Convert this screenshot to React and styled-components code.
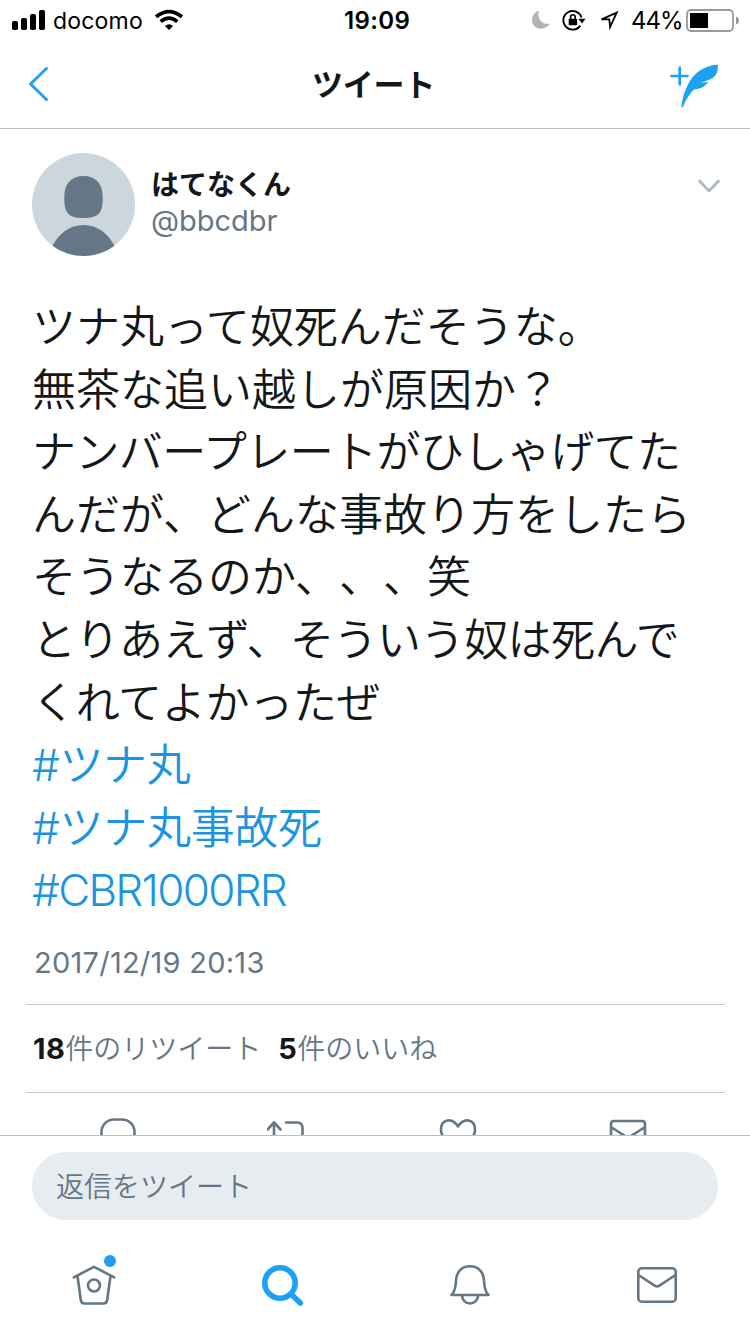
import React from "react";
import styled, { createGlobalStyle } from "styled-components";

const blue = "#1da1f2";
const slate = "#657786";
const ink = "#14171a";
const line = "#c3cdd4";

const GlobalStyle = createGlobalStyle`
  * {
    box-sizing: border-box;
  }
  body {
    margin: 0;
    background: white;
    color: ${ink};
    font-family: Inter, "Noto Sans CJK JP", sans-serif;
    text-spacing-trim: space-all;
  }
  svg {
    display: block;
    flex: none;
  }
`;

const Screen = styled.div`
  width: 750px;
  height: 1334px;
  display: flex;
  flex-direction: column;
  overflow: hidden;
  background: white;
`;

const StatusBar = styled.div`
  height: 40px;
  flex: none;
  display: grid;
  grid-template-columns: 344px 1fr 219px;
  color: black;
  font-size: 24px;
  line-height: 42px;
  white-space: nowrap;
`;

const StatusGroup = styled.div`
  display: flex;
`;

const StatusText = styled.span`
  width: ${props => props.width}px;
  font-size: ${props => props.size || 24}px;
  letter-spacing: ${props => props.spacing || 0}px;
`;

const Clock = styled.span`
  font-weight: 600;
  font-size: 24px;
  letter-spacing: 0.4px;
`;

const NavBar = styled.header`
  height: 89px;
  flex: none;
  display: flex;
  align-items: center;
  justify-content: space-between;
  padding-top: 2px;
  border-bottom: 1px solid #bcc0c4;
`;

const Title = styled.h1`
  margin: 0;
  font-size: 31px;
  font-weight: 700;
  line-height: 40px;
  letter-spacing: -0.2px;
`;

const Content = styled.main`
  flex: 1;
  min-height: 0;
  overflow: hidden;
  padding: 24px 25px 0 26px;
`;

const Author = styled.div`
  display: flex;
  padding-left: 6px;
  height: 104px;
`;

const Names = styled.div`
  flex: 1;
  padding: 14px 0 0 16px;
`;

const Name = styled.div`
  font-size: 28px;
  font-weight: 700;
  line-height: 36px;
`;

const Handle = styled.div`
  font-size: 29px;
  line-height: 36px;
  color: ${slate};
`;

const TweetText = styled.div`
  padding: 39px 0 0 6px;
`;

const TweetLine = styled.div`
  height: 62.6px;
  line-height: 62.6px;
  font-size: 44px;
  font-weight: ${props => (props.latin ? 300 : 350)};
  white-space: nowrap;
  letter-spacing: ${props => props.spacing || 0}px;
  color: ${props => (props.tag ? "#1b95e0" : ink)};
`;

const Timestamp = styled.div`
  height: 83px;
  padding: 21px 0 0 8px;
  font-size: 29px;
  line-height: 40px;
  letter-spacing: 0.25px;
  color: ${slate};
  border-bottom: 1px solid ${line};
`;

const Stats = styled.div`
  display: flex;
  gap: 17px;
  height: 88px;
  padding: 24px 0 0 7px;
  font-size: 28px;
  font-weight: 350;
  line-height: 40px;
  color: ${slate};
  border-bottom: 1px solid ${line};
`;

const Count = styled.b`
  font-size: 29px;
  font-weight: 700;
  letter-spacing: 0.4px;
  color: ${ink};
`;

const Actions = styled.div`
  display: grid;
  grid-template-columns: repeat(4, 170px);
  justify-items: center;
  padding: 25px 0 0 7px;
`;

const Composer = styled.div`
  height: 101px;
  flex: none;
  padding: 16px 32px 0;
  border-top: 1px solid #b5c0c8;
`;

const ReplyBox = styled.div`
  height: 68px;
  padding-left: 24px;
  border-radius: 34px;
  background: #e6ecf0;
  color: ${slate};
  font-size: 28px;
  font-weight: 350;
  line-height: 71px;
`;

const TabBar = styled.nav`
  height: 98px;
  flex: none;
  display: grid;
  grid-template-columns: repeat(4, 188px);
  justify-items: center;
  padding-top: 15px;
`;

const Stroke = styled.svg.attrs({ fill: "none" })`
  stroke: ${props => props.color || slate};
  stroke-width: ${props => props.weight || 2.6};
  stroke-linecap: round;
  stroke-linejoin: round;
`;

const Signal = () => (
  <svg width="53" height="40">
    <rect x="12" y="21" width="6" height="9" rx="1.8" />
    <rect x="21" y="18" width="6" height="12" rx="1.8" />
    <rect x="30" y="14" width="6" height="16" rx="1.8" />
    <rect x="39" y="10" width="6" height="20" rx="1.8" />
  </svg>
);

const Wifi = () => (
  <svg width="30" height="40" viewBox="154 0 30 40" fill="none" stroke="black">
    <path d="M156 16.8Q169 6.5 182 16.8" strokeWidth="3.8" />
    <path d="M160.7 21.6Q169 14.8 177.3 21.6" strokeWidth="3.6" />
    <path d="M165 26.1Q169 22.6 173 26.1L169 30Z" fill="black" stroke="none" />
  </svg>
);

const StatusIcons = () => (
  <svg width="100" height="40" viewBox="531 0 100 40">
    <path
      d="M539 10.4C536.5 19 543 25.8 550.2 23.3C545.8 31 533.5 30.4 532 21.3C531.4 16.6 534.5 11.8 539 10.4Z"
      fill="#b3b3b3"
    />
    <path
      d="M581.5 17.5A9.3 9.3 0 1 0 580.3 25.6"
      fill="none"
      stroke="black"
      strokeWidth="1.9"
    />
    <path d="M578.4 18.8H585.6L582 23.4Z" />
    <rect x="568.7" y="18.7" width="8.4" height="6.6" rx="0.8" />
    <path
      d="M570.6 19V17.1A2.3 2.3 0 0 1 575.2 17.1V19"
      fill="none"
      stroke="black"
      strokeWidth="1.6"
    />
    <path
      d="M616.7 12.6L601.5 19.4H609.3L610.1 27.2Z"
      fill="none"
      stroke="black"
      strokeWidth="1.8"
    />
  </svg>
);

const Battery = () => (
  <svg width="55" height="40" viewBox="685 0 55 40">
    <rect
      x="687"
      y="10"
      width="46"
      height="21"
      rx="4"
      fill="none"
      stroke="#999"
      strokeWidth="1.8"
    />
    <rect x="690" y="13" width="18" height="15" />
    <path d="M736 16.5Q739 17.5 739 20.5Q739 23.5 736 24.5Z" fill="#999" />
  </svg>
);

const Feather = () => (
  <svg width="81" height="60" viewBox="669 55 81 60">
    <path
      d="M671.5 76H687.5M679.7 67.5V84.5"
      stroke={blue}
      strokeWidth="2.7"
      strokeLinecap="round"
    />
    <path
      d="M717.8 64.4C704 66 694.5 72.5 689.3 82C684.8 90 682.3 98 681.5 106C681.3 108 682.7 107.8 683.3 106.2C686.3 98.7 689.7 93.5 694 89.4C699.5 89.2 704.8 87.2 708.4 81.8C706 82.6 703.2 82.8 701.2 82.3C703.5 81.9 705.8 81.2 707.7 80.3C715.3 77.7 718.4 73 717.8 64.4Z"
      fill={blue}
    />
  </svg>
);

const Avatar = () => (
  <svg width="103" height="103" viewBox="0 0 103 103">
    <clipPath id="avatar">
      <circle cx="51.5" cy="51.5" r="51.5" />
    </clipPath>
    <g clipPath="url(#avatar)">
      <rect width="103" height="103" fill="#ccd6dd" />
      <path
        d="M51.5 23C64 23 70.5 31 70.7 43C71 58 68.5 65 51.5 65C34.5 65 32 58 32.3 43C32.5 31 39 23 51.5 23Z"
        fill={slate}
      />
      <path d="M19 96C26 80 38 72 51.5 72S77 80 84 96V103H19Z" fill={slate} />
    </g>
  </svg>
);

const lines = [
  { text: "ツナ丸って奴死んだそうな。" },
  { text: "無茶な追い越しが原因か？" },
  { text: "ナンバープレートがひしゃげてた", spacing: -0.6 },
  { text: "んだが、どんな事故り方をしたら" },
  { text: "そうなるのか、、、笑" },
  { text: "とりあえず、そういう奴は死んで", spacing: -0.5 },
  { text: "くれてよかったぜ", spacing: -0.3 },
  { text: "#ツナ丸", tag: true, spacing: -0.4 },
  { text: "#ツナ丸事故死", tag: true, spacing: -0.3 },
  { text: "#CBR1000RR", tag: true, latin: true, spacing: -1.7 }
];

const App = () => (
  <Screen>
    <GlobalStyle />
    <StatusBar>
      <StatusGroup>
        <Signal />
        <StatusText width={101} size={23} spacing={0.2}>
          docomo
        </StatusText>
        <Wifi />
      </StatusGroup>
      <Clock>19:09</Clock>
      <StatusGroup>
        <StatusIcons />
        <StatusText width={54} spacing={-1}>
          44%
        </StatusText>
        <Battery />
      </StatusGroup>
    </StatusBar>

    <NavBar>
      <Stroke width="78" height="60" viewBox="0 55 78 60" color={blue} weight="3">
        <path d="M46.5 68.5L30.5 84L46.5 99.5" />
      </Stroke>
      <Title>ツイート</Title>
      <Feather />
    </NavBar>

    <Content>
      <Author>
        <Avatar />
        <Names>
          <Name>はてなくん</Name>
          <Handle>@bbcdbr</Handle>
        </Names>
        <Stroke width="30" height="60" viewBox="695 153 30 60" color="#aab8c2">
          <path d="M699.5 181L709 191L718.5 181" />
        </Stroke>
      </Author>

      <TweetText>
        {lines.map(({ text, tag, latin, spacing }) => (
          <TweetLine key={text} tag={tag} latin={latin ? 1 : 0} spacing={spacing}>
            {text}
          </TweetLine>
        ))}
      </TweetText>

      <Timestamp>2017/12/19 20:13</Timestamp>
      <Stats>
        <span>
          <Count>18</Count>件のリツイート
        </span>
        <span>
          <Count>5</Count>件のいいね
        </span>
      </Stats>

      <Actions>
        <Stroke width="40" height="36" viewBox="98 1118 40 36">
          <path d="M101.5 1136V1132A12.5 12.5 0 0 1 114 1119.5H122A12.5 12.5 0 0 1 134.5 1132V1136" />
        </Stroke>
        <Stroke width="42" height="36" viewBox="267 1118 42 36">
          <path d="M267.5 1129.5L274 1122.5L280.5 1129.5M274 1122.5V1145M286 1122.5H297Q302.5 1122.5 302.5 1128V1145" />
        </Stroke>
        <Stroke width="42" height="36" viewBox="437 1118 42 36">
          <path d="M458 1126.5C452 1117 441 1119 441 1130C441 1138 450 1145 458 1151C466 1145 475 1138 475 1130C475 1119 464 1117 458 1126.5Z" />
        </Stroke>
        <Stroke width="42" height="36" viewBox="607 1118 42 36">
          <path d="M611 1150V1124Q611 1121 614 1121H642Q645 1121 645 1124V1150M611 1127L628 1138L645 1127" />
        </Stroke>
      </Actions>
    </Content>

    <Composer>
      <ReplyBox>返信をツイート</ReplyBox>
    </Composer>

    <TabBar>
      <Stroke width="50" height="60" viewBox="69 1251 50 60">
        <path d="M73.8 1277.3L94 1266.8L114.2 1277.3M77.5 1276L80.8 1300Q81.3 1303.5 84.5 1303.5H103.5Q106.7 1303.5 107.2 1300L110.5 1276" />
        <circle cx="94" cy="1285.5" r="6" />
        <circle cx="110" cy="1261" r="6" fill={blue} stroke="none" />
      </Stroke>
      <Stroke width="50" height="60" viewBox="257 1251 50 60" color={blue} weight="5.6">
        <circle cx="280" cy="1283" r="15.2" />
        <path d="M291.5 1294.5L300.3 1303" />
      </Stroke>
      <Stroke width="50" height="60" viewBox="445 1251 50 60">
        <path d="M451.5 1295H488.5C485.5 1292.5 484.5 1289 484 1281C483.6 1271.5 478 1266.3 470 1266.3S456.4 1271.5 456 1281C455.5 1289 454.5 1292.5 451.5 1295Z" />
        <path d="M462 1295.5A8 8 0 0 0 478 1295.5" />
      </Stroke>
      <Stroke width="50" height="60" viewBox="633 1251 50 60">
        <rect x="638.3" y="1268.3" width="37.4" height="33.4" rx="3.5" />
        <path d="M638.5 1275L655 1285.8Q657 1287.2 659 1285.8L675.5 1275" />
      </Stroke>
    </TabBar>
  </Screen>
);

export default App;
